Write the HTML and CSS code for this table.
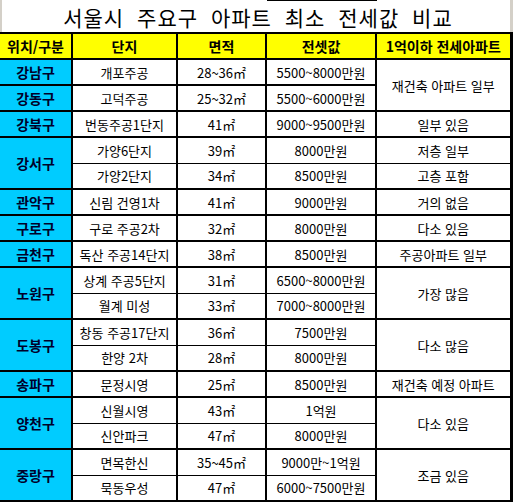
FILE: index.html
```html
<!DOCTYPE html>
<html lang="ko">
<head>
<meta charset="utf-8">
<title>서울시 주요구 아파트 최소 전세값 비교</title>
<link rel="stylesheet" href="styles.css">
</head>
<body>
<div class="title">서울시 주요구 아파트 최소 전세값 비교</div>
<table class="grid">
<colgroup><col class="c1"><col class="c2"><col class="c3"><col class="c4"><col class="c5"></colgroup>
<thead>
<tr class="head"><th>위치/구분</th><th>단지</th><th>면적</th><th>전셋값</th><th>1억이하 전세아파트</th></tr>
</thead>
<tbody>
<tr class="g"><td class="gu">강남구</td><td>개포주공</td><td>28~36㎡</td><td>5500~8000만원</td><td rowspan="2">재건축 아파트 일부</td></tr>
<tr class="g"><td class="gu">강동구</td><td>고덕주공</td><td>25~32㎡</td><td>5500~6000만원</td></tr>
<tr class="g"><td class="gu">강북구</td><td>번동주공1단지</td><td>41㎡</td><td>9000~9500만원</td><td>일부 있음</td></tr>
<tr class="g"><td class="gu" rowspan="2">강서구</td><td>가양6단지</td><td>39㎡</td><td>8000만원</td><td>저층 일부</td></tr>
<tr><td>가양2단지</td><td>34㎡</td><td>8500만원</td><td>고층 포함</td></tr>
<tr class="g"><td class="gu">관악구</td><td>신림 건영1차</td><td>41㎡</td><td>9000만원</td><td>거의 없음</td></tr>
<tr class="g"><td class="gu">구로구</td><td>구로 주공2차</td><td>32㎡</td><td>8000만원</td><td>다소 있음</td></tr>
<tr class="g"><td class="gu">금천구</td><td>독산 주공14단지</td><td>38㎡</td><td>8500만원</td><td>주공아파트 일부</td></tr>
<tr class="g"><td class="gu" rowspan="2">노원구</td><td>상계 주공5단지</td><td>31㎡</td><td>6500~8000만원</td><td rowspan="2">가장 많음</td></tr>
<tr><td>월계 미성</td><td>33㎡</td><td>7000~8000만원</td></tr>
<tr class="g"><td class="gu" rowspan="2">도봉구</td><td>창동 주공17단지</td><td>36㎡</td><td>7500만원</td><td rowspan="2">다소 많음</td></tr>
<tr><td>한양 2차</td><td>28㎡</td><td>8000만원</td></tr>
<tr class="g"><td class="gu">송파구</td><td>문정시영</td><td>25㎡</td><td>8500만원</td><td>재건축 예정 아파트</td></tr>
<tr class="g"><td class="gu" rowspan="2">양천구</td><td>신월시영</td><td>43㎡</td><td>1억원</td><td rowspan="2">다소 있음</td></tr>
<tr><td>신안파크</td><td>47㎡</td><td>8000만원</td></tr>
<tr class="g"><td class="gu" rowspan="2">중랑구</td><td>면목한신</td><td>35~45㎡</td><td>9000만~1억원</td><td rowspan="2">조금 있음</td></tr>
<tr><td>묵동우성</td><td>47㎡</td><td>6000~7500만원</td></tr>
</tbody>
</table>
</body>
</html>
```
FILE: styles.css
```css
html, body {
  margin: 0;
  padding: 0;
  background: #ffffff;
}
body {
  font-family: "Noto Sans CJK KR", "Noto Sans", sans-serif;
  color: #000;
  width: 513px;
  height: 502px;
  overflow: hidden;
}
.title {
  box-sizing: border-box;
  height: 32px;
  border-left: 2px solid #d4d0c8;
  border-right: 3px solid #d4d0c8;
  background: linear-gradient(#000, #000) no-repeat 265px 0 / 110px 1px;
  display: flex;
  align-items: center;
  justify-content: center;
  font-size: 21px;
  line-height: 1;
  letter-spacing: 1px;
  word-spacing: 6px;
  padding-left: 4px;
  padding-top: 2px;
}
.grid {
  border-collapse: collapse;
  table-layout: fixed;
  width: 514px;
  margin-left: -2px;
  border-top: 2px solid #000;
  border-right: 3px solid #000;
  border-bottom: 2px solid #000;
  border-left: 2px solid #000;
}
.c1 { width: 73px; }
.c2 { width: 105px; }
.c3 { width: 89px; }
.c4 { width: 110px; }
.c5 { width: 135px; }
.grid th, .grid td {
  border: 1px solid #000;
  border-left-width: 2px;
  border-right-width: 2px;
  padding: 0;
  text-align: center;
  vertical-align: middle;
  white-space: nowrap;
  overflow: hidden;
  font-size: 13px;
  line-height: 1;
  font-weight: 400;
}
.grid th {
  background: #ffff00;
  font-size: 14px;
  font-weight: 700;
  height: 24px;
  border-bottom-width: 2px;
}
.grid tr {
  height: 26px;
}
.grid tr.g td {
  border-top-width: 2px;
}
.grid td.gu {
  background: #00ccff;
  font-size: 14px;
  font-weight: 700;
  color: #00002a;
}
```
